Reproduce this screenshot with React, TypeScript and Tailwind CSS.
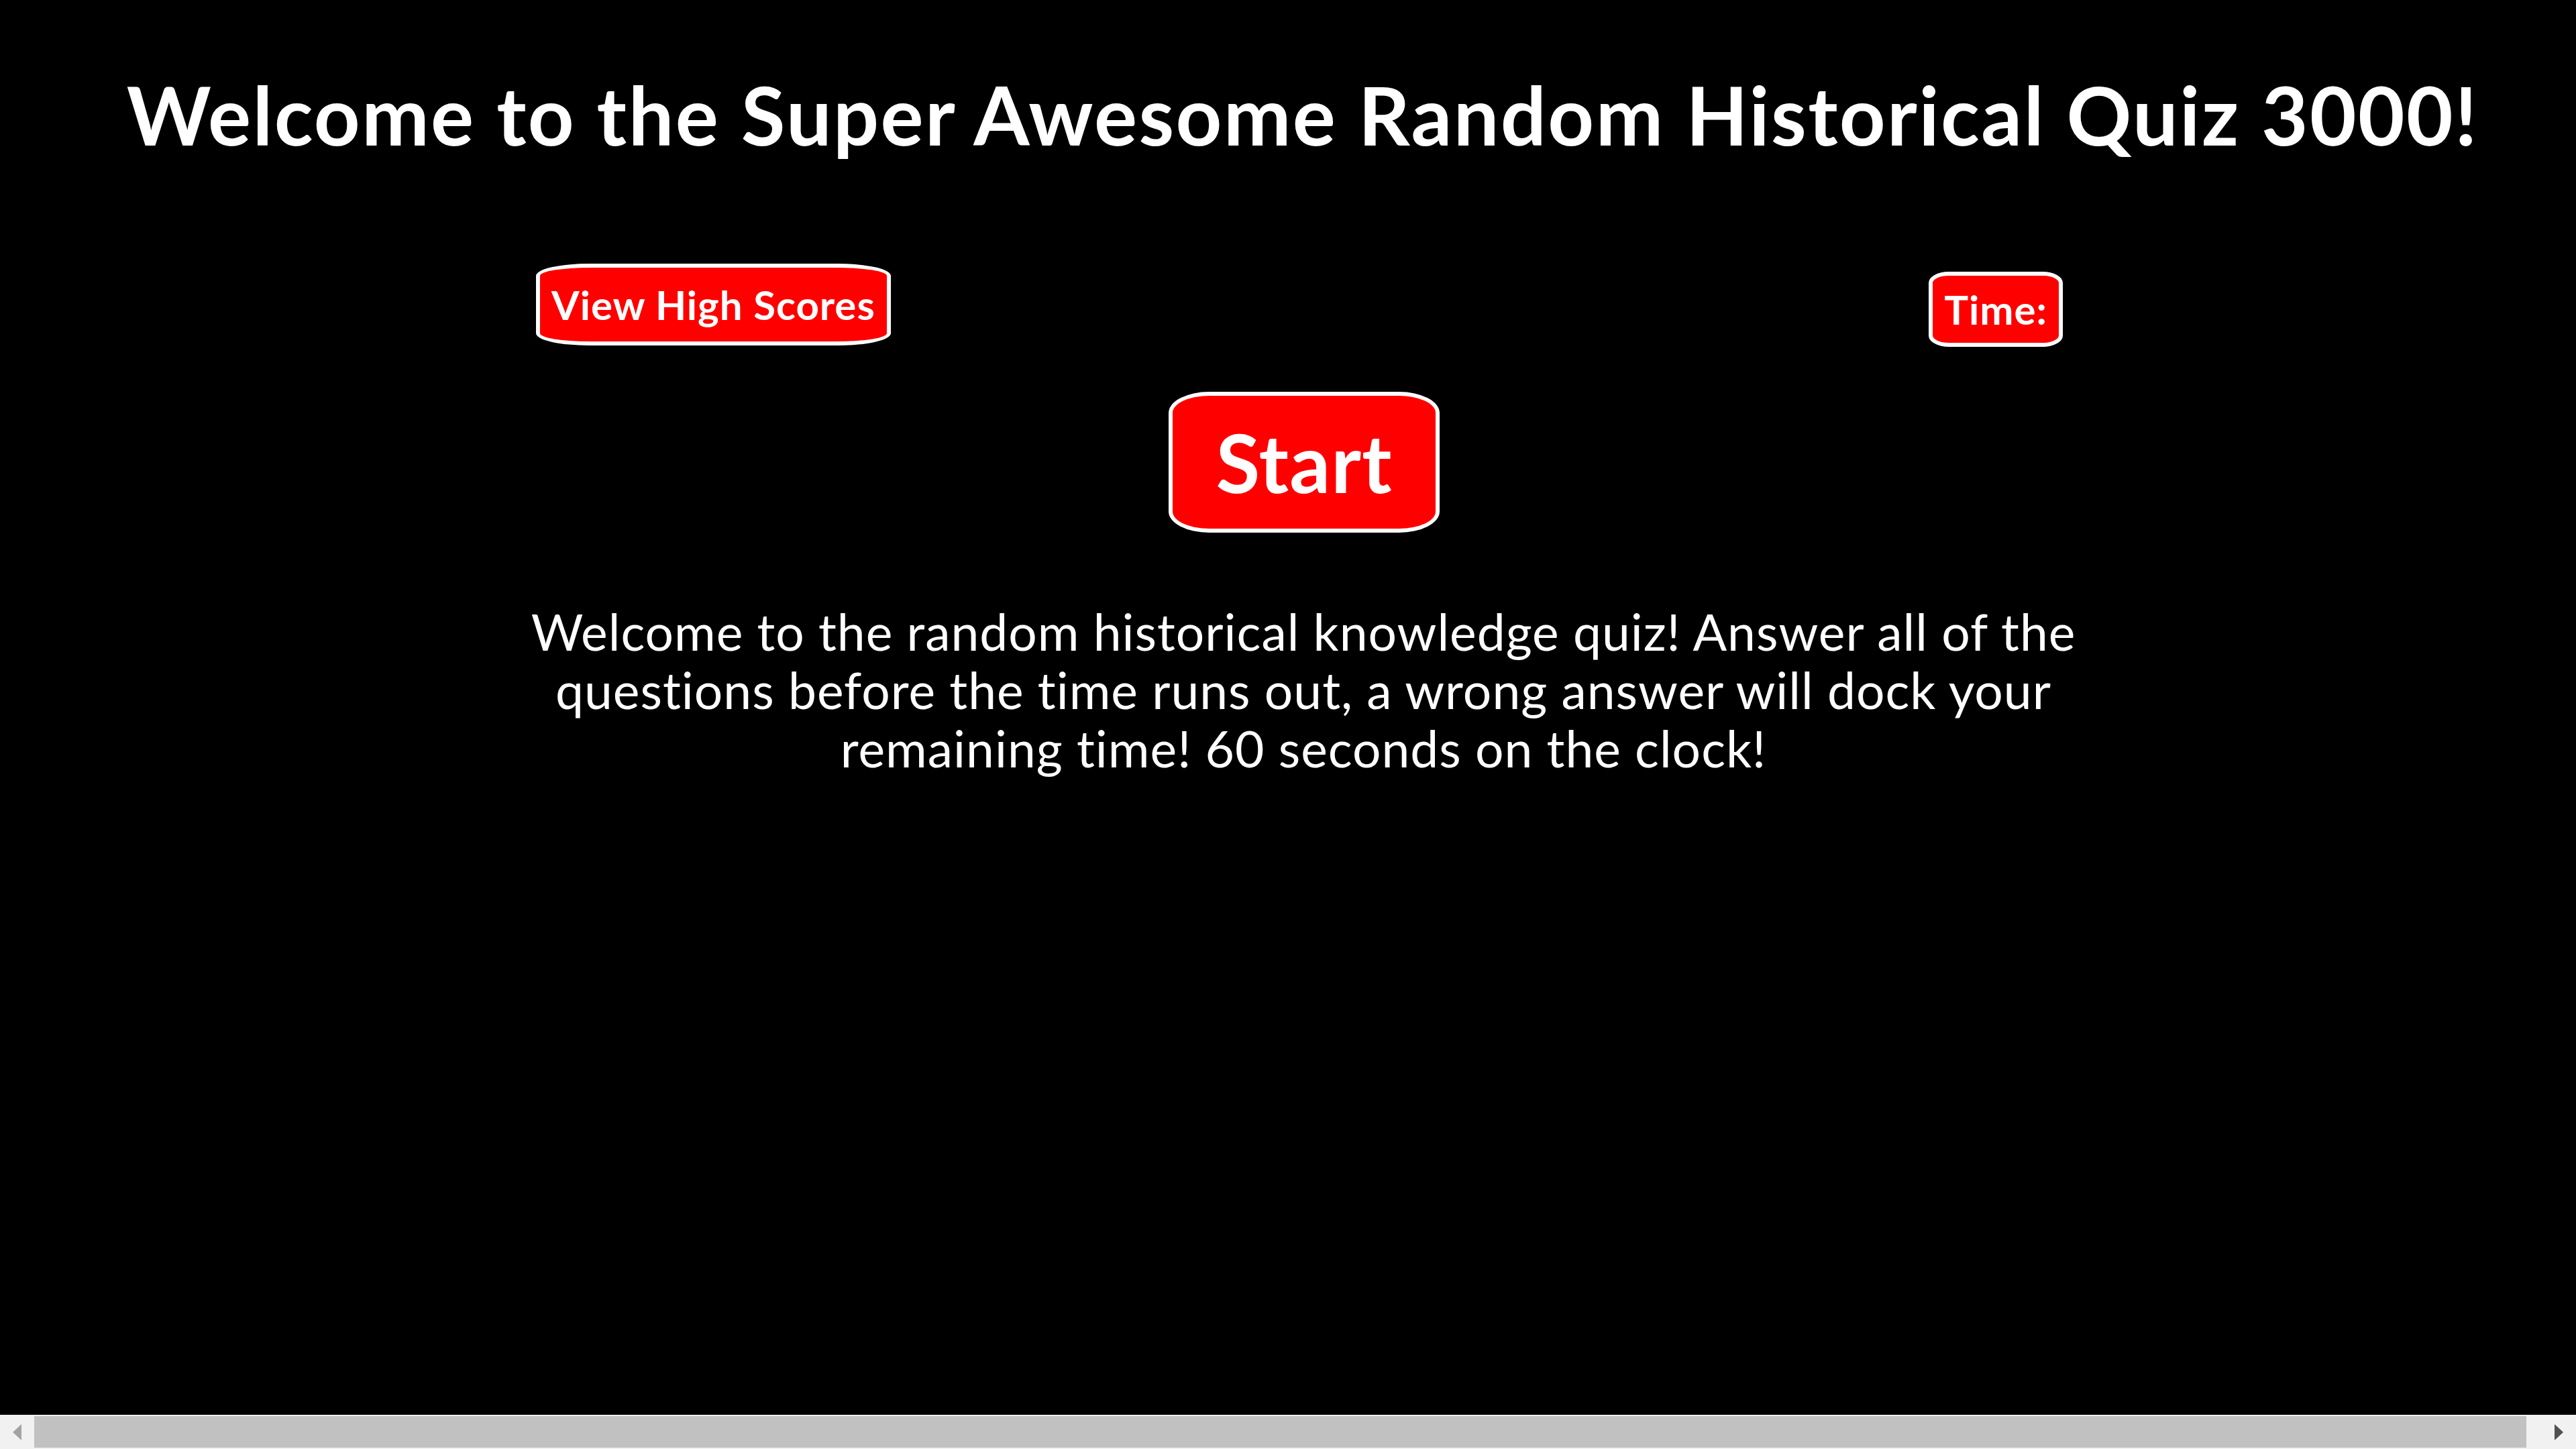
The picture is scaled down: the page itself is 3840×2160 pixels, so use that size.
import React from "react";

function ScrollBar() {
  return (
    <div className="flex h-[51px] shrink-0 bg-[#f1f1f1]">
      <div className="flex w-[51px] items-center justify-center">
        <div className="h-0 w-0 border-y-[12.5px] border-r-[13px] border-y-transparent border-r-[#a3a3a3]" />
      </div>
      <div className="flex flex-1 items-center pr-[23px]">
        <div className="h-[47px] flex-1 bg-[#c1c1c1]" />
      </div>
      <div className="flex w-[51px] items-center justify-center">
        <div className="h-0 w-0 border-y-[12.5px] border-l-[13px] border-y-transparent border-l-[#505050]" />
      </div>
    </div>
  );
}

export default function App() {
  return (
    <div
      className="flex h-screen flex-col overflow-hidden bg-black text-white"
      style={{ fontFamily: "Lato, 'Noto Sans', sans-serif" }}
    >
      <div className="flex-1">
        <h1 className="pl-[44px] pt-[111px] text-center text-[120px] font-bold leading-none tracking-[2.4px]">
          Welcome to the Super Awesome Random Historical Quiz 3000!
        </h1>

        <div className="mt-[162px] flex items-start justify-between pl-[799px] pr-[765px]">
          <button className="rounded-[15%] border-[6px] border-white bg-[#ff0000] px-[17px] py-[25px] text-[60px] font-bold leading-none tracking-[1px] text-white">
            View High Scores
          </button>
          <div className="mt-[12px] rounded-[15%] border-[6px] border-white bg-[#ff0000] px-[17px] py-[20px] text-[60px] font-bold leading-none tracking-[1px]">
            Time:
          </div>
        </div>

        <div className="mt-[67px] flex justify-center pl-[48px]">
          <button className="rounded-[15%] border-[6px] border-white bg-[#ff0000] px-[64px] py-[39px] text-[120px] font-bold leading-none tracking-[1px] text-white">
            Start
          </button>
        </div>

        <p className="mx-auto mt-[104px] w-[2480px] translate-x-[23px] text-center text-[75px] leading-[87px] tracking-[1px]">
          Welcome to the random historical knowledge quiz! Answer all of the
          questions before the time runs out, a wrong answer will dock your
          remaining time! 60 seconds on the clock!
        </p>
      </div>
      <ScrollBar />
    </div>
  );
}
